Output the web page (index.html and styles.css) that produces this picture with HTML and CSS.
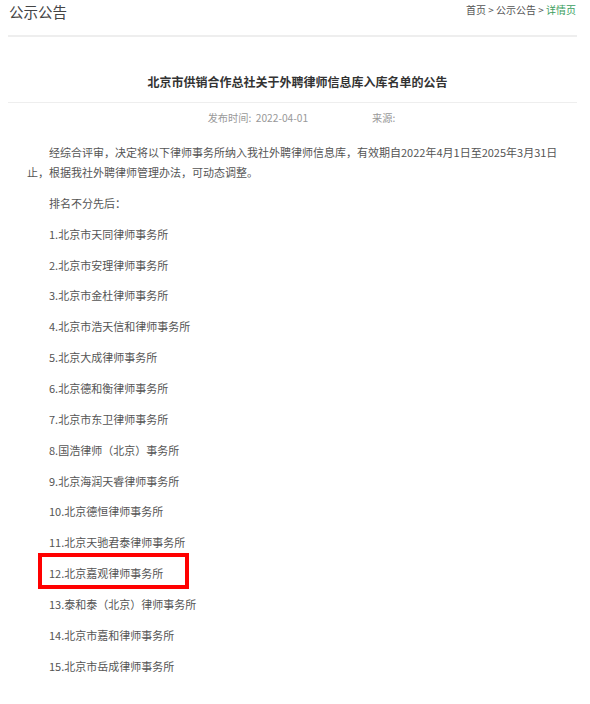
FILE: index.html
```html
<!DOCTYPE html>
<html lang="zh-CN">
<head>
<meta charset="utf-8">
<title>公示公告</title>
<link rel="stylesheet" href="styles.css">
</head>
<body>
<div class="page">
  <div class="top">
    <div class="section-title">公示公告</div>
    <div class="crumbs"><span>首页</span> &gt; <span>公示公告</span> &gt; <span class="current">详情页</span></div>
  </div>
  <div class="article">
    <h1 class="art-title">北京市供销合作总社关于外聘律师信息库入库名单的公告</h1>
    <div class="meta"><span class="date">发布时间:&nbsp;&nbsp;2022-04-01</span><span class="source">来源:</span></div>
    <div class="content">
      <p class="indent">经综合评审，决定将以下律师事务所纳入我社外聘律师信息库，有效期自2022年4月1日至2025年3月31日止，根据我社外聘律师管理办法，可动态调整。</p>
      <p class="indent">排名不分先后：</p>
      <p class="indent">1.北京市天同律师事务所</p>
      <p class="indent">2.北京市安理律师事务所</p>
      <p class="indent">3.北京市金杜律师事务所</p>
      <p class="indent">4.北京市浩天信和律师事务所</p>
      <p class="indent">5.北京大成律师事务所</p>
      <p class="indent">6.北京德和衡律师事务所</p>
      <p class="indent">7.北京市东卫律师事务所</p>
      <p class="indent">8.国浩律师（北京）事务所</p>
      <p class="indent">9.北京海润天睿律师事务所</p>
      <p class="indent">10.北京德恒律师事务所</p>
      <p class="indent">11.北京天驰君泰律师事务所</p>
      <p class="indent marked">12.北京嘉观律师事务所<span class="mark-box"></span></p>
      <p class="indent">13.泰和泰（北京）律师事务所</p>
      <p class="indent">14.北京市嘉和律师事务所</p>
      <p class="indent">15.北京市岳成律师事务所</p>
    </div>
  </div>
</div>
</body>
</html>
```

FILE: styles.css
```css
html, body {
  margin: 0;
  padding: 0;
  background: #fff;
}
body {
  font-family: "Noto Sans CJK SC", "Noto Sans", sans-serif;
  color: #555;
}
.page {
  margin-left: 8px;
  width: 569px;
}
.top {
  display: flex;
  justify-content: space-between;
  align-items: flex-start;
  height: 35px;
  border-bottom: 2px solid #eeeeee;
}
.section-title {
  font-size: 14.5px;
  line-height: 24px;
  color: #444;
  padding-left: 1px;
}
.crumbs {
  font-size: 10px;
  line-height: 20px;
  color: #555;
  padding-right: 1px;
}
.crumbs .current {
  color: #3b9e5e;
}
.article {
  padding-top: 35px;
}
.art-title {
  margin: 0;
  font-size: 12px;
  line-height: 20px;
  font-weight: bold;
  color: #333;
  text-align: center;
  padding: 0 0 10px 10px;
  border-bottom: 1px solid #eeeeee;
}
.meta {
  margin-top: 7px;
  font-size: 10.2px;
  line-height: 16px;
  color: #999;
  text-align: center;
  padding-left: 18px;
}
.meta .date {
  margin-right: 64px;
}
.content {
  padding: 16px 8px 0 19px;
  font-size: 11px;
  color: #555;
}
.content p {
  margin: 0 0 10.86px 0;
  line-height: 20px;
}
.content p.indent {
  text-indent: 2em;
}
.marked {
  position: relative;
}
.mark-box {
  position: absolute;
  left: 11px;
  top: -10.5px;
  width: 143px;
  height: 28px;
  border: 4px solid #ff0000;
}
```
